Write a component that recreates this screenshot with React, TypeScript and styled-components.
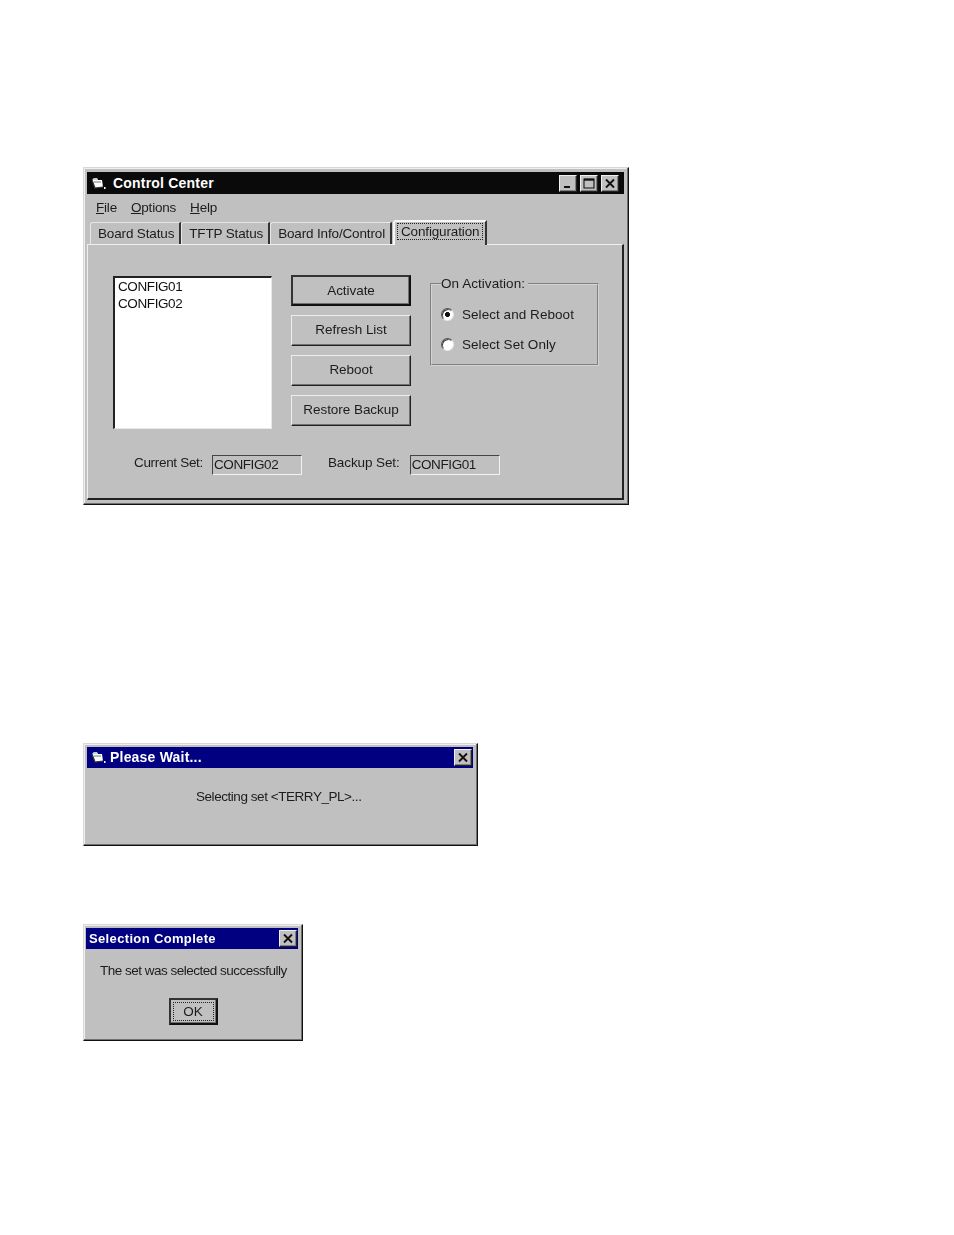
import React from 'react';
import styled, { createGlobalStyle } from 'styled-components';

const GlobalStyle = createGlobalStyle`
  html, body {
    background: #fff;
    margin: 0;
  }
  body {
    color: #1c1c1c;
    font-family: "Liberation Sans", Arial, sans-serif;
    font-size: 13.5px;
  }
`;

function AppIcon({ teal }: { teal?: boolean }) {
  return (
    <IconSvg viewBox="0 0 15 13" $teal={teal}>
      <path d="M1 3 L3 1 L6 1 L7 3 L11 3 L12 10 L4 11 Z" fill="#fff" />
      <path d="M1 3 L4 11 L12 10" fill="none" stroke="#333" strokeWidth="1.2" />
      <path d="M2 2 L6 2" stroke={teal ? '#40c0c0' : '#999'} strokeWidth="1" />
      <path d="M3 5 L10 5" stroke="#777" strokeWidth="1" />
      <rect x="13" y="10" width="1.5" height="2" fill="#fff" />
    </IconSvg>
  );
}

function CloseIcon() {
  return (
    <GlyphSvg viewBox="0 0 12 11">
      <path d="M2 1.5 L10 9.5 M10 1.5 L2 9.5" stroke="#111" strokeWidth="1.9" />
    </GlyphSvg>
  );
}

function MinIcon() {
  return (
    <GlyphSvg viewBox="0 0 12 11">
      <rect x="2" y="8" width="6" height="2" fill="#111" />
    </GlyphSvg>
  );
}

function MaxIcon() {
  return (
    <GlyphSvg viewBox="0 0 12 11">
      <path d="M1 1 H11 V10 H1 Z" fill="none" stroke="#111" strokeWidth="1.1" />
      <path d="M1 1.7 H11" stroke="#111" strokeWidth="2" />
    </GlyphSvg>
  );
}

function App() {
  return (
    <Page>
      <GlobalStyle />
      <MainWindow>
        <TitleBar $black>
          <AppIcon />
          <TitleText>Control Center</TitleText>
          <TitleButtons>
            <TitleButton><MinIcon /></TitleButton>
            <TitleButton><MaxIcon /></TitleButton>
            <TitleButton><CloseIcon /></TitleButton>
          </TitleButtons>
        </TitleBar>
        <MenuBar>
          <MenuItem><u>F</u>ile</MenuItem>
          <MenuItem><u>O</u>ptions</MenuItem>
          <MenuItem><u>H</u>elp</MenuItem>
        </MenuBar>
        <TabRow>
          <Tab>Board Status</Tab>
          <Tab>TFTP Status</Tab>
          <Tab>Board Info/Control</Tab>
          <ActiveTab><FocusLabel>Configuration</FocusLabel></ActiveTab>
        </TabRow>
        <TabPane>
          <TopRow>
            <ListBox>
              <div>CONFIG01</div>
              <div>CONFIG02</div>
            </ListBox>
            <ButtonColumn>
              <DefaultButton>Activate</DefaultButton>
              <PushButton>Refresh List</PushButton>
              <PushButton>Reboot</PushButton>
              <PushButton>Restore Backup</PushButton>
            </ButtonColumn>
            <GroupBox>
              <GroupLegend>On Activation:</GroupLegend>
              <RadioRow>
                <Radio $checked />
                Select and Reboot
              </RadioRow>
              <RadioRow>
                <Radio />
                Select Set Only
              </RadioRow>
            </GroupBox>
          </TopRow>
          <StatusRow>
            <StatusLabel>Current Set:</StatusLabel>
            <ReadOnlyField>CONFIG02</ReadOnlyField>
            <BackupLabel>Backup Set:</BackupLabel>
            <ReadOnlyField>CONFIG01</ReadOnlyField>
          </StatusRow>
        </TabPane>
      </MainWindow>

      <WaitWindow>
        <TitleBar>
          <AppIcon teal />
          <TitleText>Please Wait...</TitleText>
          <TitleButtons>
            <TitleButton><CloseIcon /></TitleButton>
          </TitleButtons>
        </TitleBar>
        <WaitMessage>Selecting set &lt;TERRY_PL&gt;...</WaitMessage>
      </WaitWindow>

      <CompleteWindow>
        <TitleBar>
          <PlainTitleText>Selection Complete</PlainTitleText>
          <TitleButtons>
            <TitleButton><CloseIcon /></TitleButton>
          </TitleButtons>
        </TitleBar>
        <CompleteMessage>The set was selected successfully</CompleteMessage>
        <OkRow>
          <OkButton><OkLabel>OK</OkLabel></OkButton>
        </OkRow>
      </CompleteWindow>
    </Page>
  );
}

const Page = styled.div`
  box-sizing: border-box;
  filter: blur(0.45px);
  height: 1068px;
  padding-left: 83px;
  padding-top: 167px;
`;

const Window = styled.div`
  background: #c0c0c0;
  border-bottom: 1px solid #111;
  border-left: 1px solid #d8d8d8;
  border-right: 1px solid #111;
  border-top: 1px solid #d8d8d8;
  box-shadow: inset -1px -1px 0 #707070, inset 1px 1px 0 #efefef;
  box-sizing: border-box;
  display: flex;
  flex-direction: column;
`;

const MainWindow = styled(Window)`
  height: 338px;
  padding: 4px 4px 4px 3px;
  width: 546px;
`;

const WaitWindow = styled(Window)`
  height: 103px;
  margin-top: 238px;
  padding: 3px 4px 3px 3px;
  width: 395px;
`;

const CompleteWindow = styled(Window)`
  height: 117px;
  margin-top: 78px;
  padding: 3px 4px 3px 2px;
  width: 220px;
`;

const TitleBar = styled.div<{ $black?: boolean }>`
  align-items: center;
  background: ${(p) => (p.$black ? '#0a0a0a' : '#000080')};
  color: #fff;
  display: flex;
  flex-shrink: 0;
  height: ${(p) => (p.$black ? '22px' : '21px')};
  padding-left: 4px;
  padding-right: ${(p) => (p.$black ? '5px' : '1px')};
`;

const IconSvg = styled.svg<{ $teal?: boolean }>`
  height: 13px;
  margin-right: ${(p) => (p.$teal ? '4px' : '7px')};
  width: 15px;
`;

const GlyphSvg = styled.svg`
  display: block;
  height: 11px;
  width: 12px;
`;

const TitleText = styled.span`
  font-size: 14px;
  font-weight: bold;
  letter-spacing: 0.2px;
  margin-top: -1px;
`;

const PlainTitleText = styled(TitleText)`
  font-size: 13px;
  letter-spacing: 0.35px;
  margin-left: -1px;
`;

const TitleButtons = styled.div`
  display: flex;
  gap: 3px;
  margin-left: auto;
`;

const TitleButton = styled.div`
  align-items: center;
  background: #c0c0c0;
  border-bottom: 1px solid #222;
  border-left: 1px solid #f0f0f0;
  border-right: 1px solid #222;
  border-top: 1px solid #f0f0f0;
  box-shadow: inset -1px -1px 0 #808080;
  box-sizing: border-box;
  display: flex;
  height: 17px;
  justify-content: center;
  width: 18px;
`;

const MenuBar = styled.div`
  align-items: center;
  display: flex;
  flex-shrink: 0;
  gap: 14px;
  height: 26px;
  padding-left: 9px;
`;

const MenuItem = styled.span`
  letter-spacing: -0.2px;
`;

const TabRow = styled.div`
  align-items: flex-end;
  display: flex;
  flex-shrink: 0;
  height: 24px;
  letter-spacing: -0.15px;
  padding-left: 3px;
  position: relative;
  z-index: 1;
`;

const Tab = styled.div`
  align-items: center;
  border-left: 1px solid #e6e6e6;
  border-right: 2px solid #333;
  border-top: 1px solid #e6e6e6;
  border-top-left-radius: 3px;
  box-sizing: border-box;
  display: flex;
  height: 22px;
  padding: 0 5px 1px 7px;
  white-space: nowrap;
`;

const ActiveTab = styled(Tab)`
  background: #c0c0c0;
  border-left: 2px solid #f6f6f6;
  border-top: 2px solid #f6f6f6;
  height: 25px;
  margin-bottom: -1px;
  margin-left: 1px;
  padding: 0 2px 5px 2px;
`;

const FocusLabel = styled.span`
  border: 1px dotted #222;
  padding: 0 3px;
`;

const TabPane = styled.div`
  border-bottom: 2px solid #222;
  border-left: 1px solid #efefef;
  border-right: 2px solid #222;
  border-top: 1px solid #efefef;
  box-sizing: border-box;
  display: flex;
  flex: 1;
  flex-direction: column;
  padding: 31px 20px 0 25px;
`;

const TopRow = styled.div`
  align-items: flex-start;
  display: flex;
`;

const ListBox = styled.div`
  background: #fff;
  border-bottom: 1px solid #e8e8e8;
  border-left: 2px solid #222;
  border-right: 1px solid #e8e8e8;
  border-top: 2px solid #222;
  box-sizing: border-box;
  color: #111;
  flex-shrink: 0;
  height: 153px;
  letter-spacing: -0.4px;
  line-height: 16.5px;
  padding: 1px 3px 0;
  width: 159px;
`;

const ButtonColumn = styled.div`
  display: flex;
  flex-direction: column;
  flex-shrink: 0;
  gap: 9px;
  margin-left: 19px;
  margin-top: -1px;
`;

const PushButton = styled.div`
  align-items: center;
  border-bottom: 1px solid #222;
  border-left: 1px solid #eee;
  border-right: 1px solid #222;
  border-top: 1px solid #eee;
  box-shadow: inset -1px -1px 0 #707070;
  box-sizing: border-box;
  display: flex;
  height: 31px;
  justify-content: center;
  letter-spacing: -0.05px;
  padding-bottom: 2px;
  width: 120px;
`;

const DefaultButton = styled(PushButton)`
  border: 2px solid #111;
  border-left-color: #333;
  border-top-color: #333;
  padding-bottom: 0;
`;

const GroupBox = styled.fieldset`
  border: 2px groove #d4d4d4;
  box-sizing: border-box;
  flex-shrink: 0;
  height: 90px;
  margin: 0 0 0 19px;
  padding: 8px 0 0 9px;
  width: 169px;
`;

const GroupLegend = styled.legend`
  letter-spacing: 0.05px;
  margin-left: 0;
  padding: 0 3px 0 0;
`;

const RadioRow = styled.div`
  align-items: center;
  display: flex;
  gap: 8px;
  height: 30px;
  letter-spacing: 0.05px;
`;

const Radio = styled.span<{ $checked?: boolean }>`
  background: ${(p) => (p.$checked ? 'radial-gradient(circle, #111 0 2.2px, #fff 2.8px)' : '#fff')};
  border-bottom: 1px solid #e8e8e8;
  border-left: 1px solid #555;
  border-radius: 50%;
  border-right: 1px solid #e8e8e8;
  border-top: 1px solid #555;
  box-shadow: inset 1px 1px 0 #444;
  box-sizing: border-box;
  display: inline-block;
  height: 13px;
  width: 13px;
`;

const StatusRow = styled.div`
  align-items: center;
  display: flex;
  margin-top: 26px;
  padding-left: 21px;
`;

const StatusLabel = styled.span`
  letter-spacing: -0.32px;
  margin-right: 9px;
  margin-top: -6px;
  white-space: nowrap;
`;

const BackupLabel = styled(StatusLabel)`
  letter-spacing: -0.1px;
  margin-left: 26px;
  margin-right: 10px;
`;

const ReadOnlyField = styled.div`
  align-items: center;
  border-bottom: 1px solid #f2f2f2;
  border-left: 1px solid #444;
  border-right: 1px solid #f2f2f2;
  border-top: 1px solid #444;
  box-sizing: border-box;
  display: flex;
  height: 20px;
  letter-spacing: -0.4px;
  padding: 0 0 1px 1px;
  width: 90px;
`;

const WaitMessage = styled.div`
  letter-spacing: -0.45px;
  margin-top: 21px;
  padding-left: 109px;
`;

const CompleteMessage = styled.div`
  letter-spacing: -0.5px;
  margin-top: 14px;
  padding-left: 14px;
  white-space: nowrap;
`;

const OkRow = styled.div`
  display: flex;
  justify-content: center;
  margin-top: 20px;
  padding-left: 2px;
`;

const OkButton = styled(PushButton)`
  border: 2px solid #111;
  border-left-color: #333;
  border-top-color: #333;
  height: 27px;
  padding: 2px;
  width: 49px;
`;

const OkLabel = styled.div`
  align-items: center;
  border: 1px dotted #222;
  box-sizing: border-box;
  display: flex;
  flex: 1;
  height: 100%;
  justify-content: center;
`;

export default App;
